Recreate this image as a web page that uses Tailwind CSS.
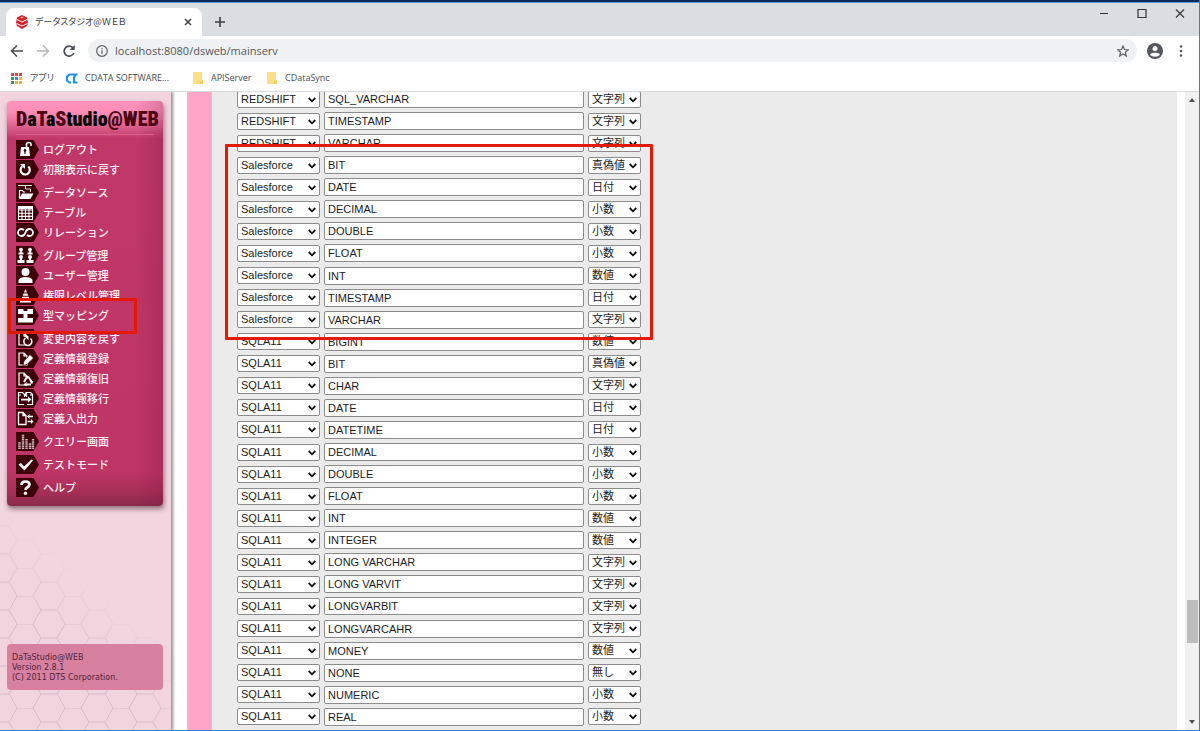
<!DOCTYPE html>
<html lang="ja">
<head>
  <meta charset="UTF-8" />
  <meta name="viewport" content="width=device-width, initial-scale=1.0"/>
  <title>データスタジオ@ＷＥＢ</title>
  <script src="https://cdn.jsdelivr.net/npm/@tailwindcss/browser@4"></script>
</head>
<body class="h-screen flex flex-col overflow-hidden bg-white border-r border-b border-[#3b7fc4] font-['Open_Sans','Noto_Sans_CJK_JP',sans-serif] text-[#5f6368]">

  <!-- tab strip -->
  <header class="flex-none bg-[#dadde2] border-t-2 border-[#0c2c5c]">
    <div class="h-[34px] flex items-start border-t border-[#5b9bd8]">
      <div class="ml-[6px] mt-[5px] w-[196px] h-7 bg-white rounded-t-lg flex items-center pl-[10px] pr-[6px]">
        <svg class="w-3 h-[14px] flex-none" viewBox="0 0 12 14">
          <path d="M6 0L11 2.500L12 8L11 11L6 14L1 11L0 8L1 2.500z" fill="#d2232a"/>
          <path d="M1 4.500L6 7L11 4.500M.5 8.500L6 11L11.500 8.500" fill="none" stroke="#fff" stroke-width="1"/>
          <path d="M4 2.500L6 1.500L8 2.500L6 3.500z" fill="#f6b0b3"/>
        </svg>
        <span class="ml-[7px] flex-1 text-[9px] leading-4 whitespace-nowrap font-['Noto_Sans_CJK_JP',sans-serif] [font-feature-settings:'palt'] text-[#3c4043]">データスタジオ@ＷＥＢ</span>
        <button type="button" aria-label="タブを閉じる" class="w-4 h-4 flex items-center justify-center">
          <svg class="w-2 h-2" viewBox="0 0 8 8" fill="none" stroke="#3c4043" stroke-width="1.500"><path d="M1 1L7 7M7 1L1 7"/></svg>
        </button>
      </div>
      <button type="button" aria-label="新しいタブ" class="ml-[10px] mt-[11px] w-4 h-4 flex items-center justify-center">
        <svg class="w-[10px] h-[10px]" viewBox="0 0 10 10" fill="none" stroke="#3c4043" stroke-width="1.600"><path d="M5 0V10M0 5H10"/></svg>
      </button>
      <div class="ml-auto flex items-center gap-[26px] mt-[5px] mr-[13px]">
        <button type="button" aria-label="最小化" class="w-3 h-3"><svg viewBox="0 0 12 12" stroke="#333" fill="none"><path d="M2 5.500H10"/></svg></button>
        <button type="button" aria-label="最大化" class="w-3 h-3"><svg viewBox="0 0 12 12" stroke="#333" stroke-width="1.200" fill="none"><path d="M2 1.500H10V9.500H2z"/></svg></button>
        <button type="button" aria-label="閉じる" class="w-3 h-3"><svg viewBox="0 0 12 12" stroke="#333" stroke-width="1.100" fill="none"><path d="M2 1.500L10 9.500M10 1.500L2 9.500"/></svg></button>
      </div>
    </div>
  </header>

  <!-- toolbar -->
  <div class="flex-none h-[29px] flex items-center pl-[10px] pr-4">
    <button type="button" aria-label="戻る" class="w-[14px]"><svg viewBox="0 0 14 14" fill="none" stroke="#4a4d51" stroke-width="1.600"><path d="M13 7H2M7 1.500L1.500 7L7 12.500"/></svg></button>
    <button type="button" aria-label="進む" class="w-[14px] ml-3"><svg viewBox="0 0 14 14" fill="none" stroke="#b4b6b9" stroke-width="1.400"><path d="M1 7H12M7 1.500L12.500 7L7 12.500"/></svg></button>
    <button type="button" aria-label="再読み込み" class="w-[14px] ml-3"><svg viewBox="0 0 14 14" fill="none" stroke="#4a4d51" stroke-width="1.700"><path d="M11.800 9A5 5 0 1 1 10.800 3.600"/><path d="M12.700 1V6H7.700z" fill="#4a4d51" stroke="none"/></svg></button>
    <div class="ml-[12px] flex-1 h-[23px] rounded-full bg-[#f0f1f2] flex items-center pl-2 pr-2">
      <svg class="w-3 h-3 flex-none" viewBox="0 0 12 12" fill="none" stroke="#5f6368" stroke-width="1.200"><circle cx="6" cy="6" r="5.300"/><path d="M6 5.200V9M6 3V4.300"/></svg>
      <input type="text" aria-label="アドレス" value="localhost:8080/dsweb/mainserv" class="ml-[7px] flex-1 min-w-0 bg-transparent text-[11px] leading-4 text-[#53575b] outline-none" />
      <button type="button" aria-label="ブックマークに追加" class="w-3 h-3"><svg viewBox="0 0 12 12" fill="none" stroke="#5f6368" stroke-width="1.200"><path d="M6 1L7.500 4.500L11.300 4.800L8.400 7.300L9.300 11L6 9L2.700 11L3.600 7.300L.7 4.800L4.500 4.500z"/></svg></button>
    </div>
    <button type="button" aria-label="プロフィール" class="ml-[10px] w-4 h-4"><svg viewBox="0 0 16 16"><circle cx="8" cy="8" r="8" fill="#54585c"/><circle cx="8" cy="5.500" r="2.500" fill="#fff"/><path d="M3 11.500C4 9 12 9 13 11.500C11 14.500 5 14.500 3 11.500z" fill="#fff"/></svg></button>
    <button type="button" aria-label="メニュー" class="ml-[16px] w-[4px]"><svg viewBox="0 0 4 12" fill="#54585c"><circle cx="2" cy="1.500" r="1.300"/><circle cx="2" cy="6" r="1.300"/><circle cx="2" cy="10.500" r="1.300"/></svg></button>
  </div>

  <!-- bookmarks -->
  <nav aria-label="ブックマーク" class="flex-none h-[27px] flex items-center pl-[11px] border-b border-[#dcdcdc] text-[9px] leading-4 text-[#4a4d51]">
    <a href="#" class="flex items-center w-[54px]">
      <svg class="w-[11px] h-[11px] mr-[8px]" viewBox="0 0 11 11">
        <path d="M0 0h3v3H0zM4 0h3v3H4zM8 0h3v3H8z" fill="#e2453c"/>
        <path d="M0 4h3v3H0z" fill="#3c9a56"/><path d="M4 4h3v3H4z" fill="#4285f4"/><path d="M8 4h3v3H8z" fill="#f5b52b"/>
        <path d="M0 8h3v3H0z" fill="#3c9a56"/><path d="M4 8h3v3H4zM8 8h3v3H8z" fill="#f5b52b"/>
      </svg>
      <span class="[font-feature-settings:'palt'] whitespace-nowrap">アプリ</span>
    </a>
    <a href="#" class="flex items-center w-[127px] whitespace-nowrap">
      <svg class="w-[13px] h-[11px] mr-[7px]" viewBox="0 0 13 11" fill="none" stroke="#1e90f0" stroke-width="2.200"><path d="M12.500 1.500H4.500L2 3.500V7.500L4.500 9.500H6M12.500 9.500H8M10.500 1.500L9 4.500V9.500"/></svg>
      CDATA SOFTWARE...
    </a>
    <a href="#" class="flex items-center w-[74px]">
      <svg class="w-3 h-3 mr-[7px]" viewBox="0 0 12 12"><path d="M1 0h9v8h1v4H1z" fill="#fcdf86"/><path d="M8 9h3v3H8z" fill="#f3cd62"/></svg>
      APIServer
    </a>
    <a href="#" class="flex items-center">
      <svg class="w-3 h-3 mr-[7px]" viewBox="0 0 12 12"><path d="M1 0h9v8h1v4H1z" fill="#fcdf86"/><path d="M8 9h3v3H8z" fill="#f3cd62"/></svg>
      CDataSync
    </a>
  </nav>

  <div class="flex-1 min-h-0 flex">

    <!-- sidebar -->
    <aside class="relative flex-none w-[171px] flex flex-col justify-between bg-[#f2d4de] shadow-[1px_0_3px_1px_rgba(0,0,0,0.45)] [clip-path:inset(0_-8px_0_0)] pt-[9px] pl-[7px] pr-2 pb-10">
      <svg class="absolute left-0 bottom-0 w-full h-[210px] [mask-image:linear-gradient(40deg,black_40%,transparent_64%)]">
        <defs>
          <pattern id="hex" width="48" height="28" patternUnits="userSpaceOnUse" patternTransform="translate(17 20)">
            <path d="M0 0H16L24 14H40L48 28M16 28L24 14M40 14L48 0" fill="none" stroke="#d5bac6" stroke-width="1"/>
          </pattern>
        </defs>
        <rect width="100%" height="100%" fill="url(#hex)"/>
      </svg>

      <div class="relative h-[405px] rounded-[4px] px-[9px] bg-[linear-gradient(to_right,transparent_82%,rgba(120,20,60,0.25)_100%),linear-gradient(to_bottom,#ff94bc_0,#fb8cb5_12px,#c03868_38px,#bf3566_370px,#ac3059_388px,#8a2b4c_100%)] shadow-[1px_3px_5px_rgba(80,50,60,0.6)]">
        <h1 class="h-[34px] pt-1 border-b border-[#d8618e] text-[20px] leading-7 font-black font-['Roboto_Condensed','Liberation_Sans',sans-serif] text-black whitespace-nowrap"><span class="text-[#4a0414]">D</span>a<span class="text-[#4a0414]">T</span>a<span class="text-[#4a0414]">S</span>tudio<span class="text-[#4a0414]">@WEB</span></h1>
        <nav id="menu" aria-label="メニュー" class="mt-[4px] flex flex-col gap-[3px]"></nav>
        <div class="absolute left-[1px] top-[197px] w-[129px] h-[36px] border-3 border-[#e41a00] pointer-events-none"></div>
      </div>

      <div class="relative h-[46px] rounded-[4px] bg-[#d780a0] pl-[5px] pt-[9px] font-['DejaVu_Sans',sans-serif] text-[8px] leading-[10px] text-[#54253a] whitespace-nowrap">
        <p>DaTaStudio@WEB</p>
        <p>Version 2.8.1</p>
        <p>(C) 2011 DTS Corporation.</p>
      </div>
    </aside>

    <!-- type mapping list -->
    <main class="flex-1 min-w-0 ml-4 mr-2 flex overflow-hidden bg-[#ebebeb]">
      <div class="flex-none w-[25px] bg-[#ffa6c8] border-x border-[#f7b6cd]"></div>
      <div class="relative flex-1 min-w-0 pl-[25px]">
        <table class="-mt-[4px] h-[640px] border-collapse font-['Liberation_Sans','Noto_Sans_CJK_JP',sans-serif] text-[11px] text-[#1c1c1c]">
          <tbody id="types"></tbody>
        </table>
        <div class="absolute left-[13px] top-[52px] w-[428px] h-[196px] border-3 border-[#e41a00] rounded-[1px] pointer-events-none"></div>
      </div>
    </main>

    <!-- scrollbar -->
    <div class="flex-none w-[14px] bg-[#f1f1f1] flex flex-col items-center justify-between py-[6px]">
      <svg class="w-[6px] h-[4px]" viewBox="0 0 6 4"><path d="M0 4L3 0L6 4z" fill="#505050"/></svg>
      <div class="flex-1 w-[11px] flex flex-col">
        <div class="flex-[497]"></div>
        <div class="h-[43px] bg-[#bdbdbd]"></div>
        <div class="flex-[77]"></div>
      </div>
      <svg class="w-[6px] h-[4px]" viewBox="0 0 6 4"><path d="M0 0L3 4L6 0z" fill="#505050"/></svg>
    </div>
  </div>

  <script>
    const doc = '<path d="M3 4H8L11 7V16H3z M8 4V7H11" fill="none" stroke="#fff" stroke-width="1.200"/>';
    const person = (x) => `<circle cx="${x}" cy="3.700" r="1.900"/><path d="M${x - .8} 5H${x + .8}V6.500H${x + 2.500}V8.500H${x - 2.500}V6.500H${x - .8}z"/><circle cx="${x}" cy="11" r="2"/><path d="M${x - 1} 12H${x + 1}V14H${x + 3.500}V17H${x - 3.500}V14H${x - 1}z"/>`;

    const icons = {
      logout: '<path fill-rule="evenodd" d="M5 7H13L14 16H4zM9 9A1.500 1.500 0 0 0 8.400 11.800V14H9.600V11.800A1.500 1.500 0 0 0 9 9z"/><path d="M10.500 7V4.500Q10.500 2.500 12.800 2.500T15 4.500V6" fill="none" stroke="#fff" stroke-width="1.600"/>',
      reset: '<path d="M12.300 6.500A4.600 4.600 0 1 1 6.300 6.300" fill="none" stroke="#fff" stroke-width="2.200"/><path d="M4 4H9V9z"/>',
      source: '<path d="M2 2.500H16M9.500 2.500V6H14.500V9" fill="none" stroke="#e8dcdf" stroke-width="1"/><path d="M3.500 15V7.500H6.500L7.500 9H9" fill="none" stroke="#fff" stroke-width="1.200"/><path d="M6 10.500H17.500L14.500 16H3z"/>',
      table: '<path d="M2.500 3.500H16.500V16.500H2.500zM2.500 7H16.500M2.500 10.200H16.500M2.500 13.400H16.500M6 5V16.500M9.500 5V16.500M13 5V16.500" fill="none" stroke="#fff" stroke-width="1.100"/><path d="M2 3H17V6H2z"/>',
      relation: '<path d="M8 7Q6.500 6 5.500 6A3.500 3.500 0 0 0 5.500 13Q8.500 13 9.500 9.500T13.500 6A3.500 3.500 0 0 1 13.500 13Q12 13 11 12" fill="none" stroke="#fff" stroke-width="1.800"/>',
      group: person(5) + person(14),
      user: '<circle cx="9.500" cy="6" r="4"/><path d="M2.500 17V14Q4 11 9.500 11T16.500 14V17z"/>',
      level: '<path d="M9.500 3L11 6.500H8zM7.600 7.500H11.400L12.300 9.700H6.700zM6.300 10.700H12.700L13.700 13H5.300zM4.800 14H14.200L15.200 16.500H3.800z"/>',
      mapping: '<path d="M2 3H7.500V5H11.500V3H17V8H11.500V12H17V16.500H2V12H7.500V8H2z"/>',
      undo: doc + '<circle cx="12" cy="12" r="5" fill="#3d0009"/><path d="M14.500 9.500A4 4 0 1 1 9.500 9.200" fill="none" stroke="#fff" stroke-width="1.500"/><path d="M8 7H12.500V11z"/>',
      edit: doc + '<path d="M7 16.500L8 12L14 5.500L17.500 9L11 15.500z" stroke="#3d0009" stroke-width=".7"/>',
      restore: doc + '<circle cx="12" cy="12" r="4.800" fill="#3d0009"/><path d="M8 13L10.500 8.500M12.500 8L15.500 12.500M15 15.500H9.500" fill="none" stroke="#fff" stroke-width="1.900"/><path d="M9 7H13L11.500 10zM13.500 12H17.500L16 15.500zM10.500 13V17.500L7.500 15.500z"/>',
      move: '<path d="M8 15.500H2.500V3.500H6.500L8.500 5.500V8M11 15.500H16.500V5.500L14.500 3.500H10.500V8M2.500 6H5M14 6H16.500M9.500 3.500V7" fill="none" stroke="#fff" stroke-width="1.200"/><path d="M5 9.700H12V7.500L15.500 10.500L12 13.500V11.500H5z"/>',
      inout: '<path d="M2.500 3.500H7L10 6.500V15.500H2.500zM7 3.500V6.500H10" fill="none" stroke="#fff" stroke-width="1.300"/><path d="M11 7.500L13.500 5V6.800H17V8.200H13.500V10zM17.500 12.500L15 10V11.800H11.500V13.200H15V15z"/>',
      query: '<path d="M3.500 17V10M7 17V2M10.500 17V7M14 17V11M17 17V7" stroke="#cdb9bd" stroke-width="2.400" stroke-dasharray="1.500 .6"/>',
      test: '<path d="M2.500 9.500L5 8L8 11.500L15.500 4.500L17 5.500L8.500 15.500z"/>',
      help: '<path d="M5.500 7Q5.500 3.500 9.500 3.500T13.500 6.500Q13.500 8.200 11.500 9.200T9.500 12" fill="none" stroke="#fff" stroke-width="2.700"/><circle cx="9.500" cy="15.300" r="1.700"/>'
    };

    const menu = [
      [['logout', 'ログアウト'], ['reset', '初期表示に戻す']],
      [['source', 'データソース'], ['table', 'テーブル'], ['relation', 'リレーション']],
      [['group', 'グループ管理'], ['user', 'ユーザー管理'], ['level', '権限レベル管理'], ['mapping', '型マッピング']],
      [['undo', '変更内容を戻す'], ['edit', '定義情報登録'], ['restore', '定義情報復旧'], ['move', '定義情報移行'], ['inout', '定義入出力']],
      [['query', 'クエリー画面']],
      [['test', 'テストモード']],
      [['help', 'ヘルプ']]
    ];

    document.getElementById('menu').innerHTML = menu.map((group) => `
      <ul>${group.map(([icon, label]) => `
        <li>
          <a href="#" class="h-5 flex items-center gap-1 text-[11px] leading-5 font-medium text-[#fdeef4] whitespace-nowrap font-['Noto_Sans_CJK_JP',sans-serif]">
            <svg class="w-[23px] h-[19px] flex-none" viewBox="0 0 23 19" fill="#fff"><path d="M0 0H17.500L23 9.500L17.500 19H0z" fill="#3d0009"/>${icons[icon]}</svg>
            ${label}
          </a>
        </li>`).join('')}
      </ul>`).join('');

    const kinds = ['文字列', '真偽値', '日付', '小数', '数値', '無し'];
    const sources = ['REDSHIFT', 'Salesforce', 'SQLA11'];
    const types = [
      ['REDSHIFT', 'SQL_VARCHAR', '文字列'],
      ['REDSHIFT', 'TIMESTAMP', '文字列'],
      ['REDSHIFT', 'VARCHAR', '文字列'],
      ['Salesforce', 'BIT', '真偽値'],
      ['Salesforce', 'DATE', '日付'],
      ['Salesforce', 'DECIMAL', '小数'],
      ['Salesforce', 'DOUBLE', '小数'],
      ['Salesforce', 'FLOAT', '小数'],
      ['Salesforce', 'INT', '数値'],
      ['Salesforce', 'TIMESTAMP', '日付'],
      ['Salesforce', 'VARCHAR', '文字列'],
      ['SQLA11', 'BIGINT', '数値'],
      ['SQLA11', 'BIT', '真偽値'],
      ['SQLA11', 'CHAR', '文字列'],
      ['SQLA11', 'DATE', '日付'],
      ['SQLA11', 'DATETIME', '日付'],
      ['SQLA11', 'DECIMAL', '小数'],
      ['SQLA11', 'DOUBLE', '小数'],
      ['SQLA11', 'FLOAT', '小数'],
      ['SQLA11', 'INT', '数値'],
      ['SQLA11', 'INTEGER', '数値'],
      ['SQLA11', 'LONG VARCHAR', '文字列'],
      ['SQLA11', 'LONG VARVIT', '文字列'],
      ['SQLA11', 'LONGVARBIT', '文字列'],
      ['SQLA11', 'LONGVARCAHR', '文字列'],
      ['SQLA11', 'MONEY', '数値'],
      ['SQLA11', 'NONE', '無し'],
      ['SQLA11', 'NUMERIC', '小数'],
      ['SQLA11', 'REAL', '小数']
    ];

    const options = (list, current) => list.map((o) => `<option${o === current ? ' selected' : ''}>${o}</option>`).join('');
    const arrow = '<svg class="absolute right-1 top-[6px] w-2 h-[6px] pointer-events-none" viewBox="0 0 8 6" fill="none" stroke="#111" stroke-width="1.800"><path d="M.7 1L4 4.300L7.300 1"/></svg>';

    document.getElementById('types').innerHTML = types.map(([source, name, kind]) => `
      <tr>
        <td class="p-0 pr-1"><div class="relative"><select aria-label="データソース種別" class="block appearance-none w-[83px] h-[17px] bg-white border border-[#8c8c8c] rounded-[2px] pl-[3px] leading-[15px]">${options(sources, source)}</select>${arrow}</div></td>
        <td class="p-0 pr-1"><input type="text" aria-label="型名" value="${name}" class="block w-[260px] h-[18px] bg-white border border-[#8c8c8c] rounded-[2px] px-[3px] leading-4" /></td>
        <td class="p-0"><div class="relative"><select aria-label="データ型" class="block appearance-none w-[53px] h-[17px] bg-white border border-[#8c8c8c] rounded-[2px] pl-[3px] leading-[15px]">${options(kinds, kind)}</select>${arrow}</div></td>
      </tr>`).join('');
  </script>
</body>
</html>
